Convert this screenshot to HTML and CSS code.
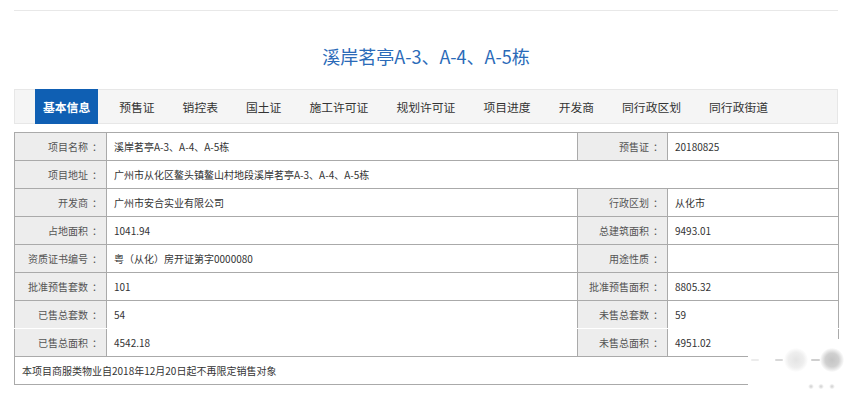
FILE: index.html
```html
<!DOCTYPE html>
<html lang="zh-CN">
<head>
<meta charset="utf-8">
<title>溪岸茗亭A-3、A-4、A-5栋</title>
<link rel="stylesheet" href="styles.css">
</head>
<body>
<div class="page">
  <div class="topline"></div>
  <h1 class="title">溪岸茗亭A-3、A-4、A-5栋</h1>
  <ul class="tabs">
    <li class="tab active">基本信息</li>
    <li class="tab">预售证</li>
    <li class="tab">销控表</li>
    <li class="tab">国土证</li>
    <li class="tab">施工许可证</li>
    <li class="tab">规划许可证</li>
    <li class="tab">项目进度</li>
    <li class="tab">开发商</li>
    <li class="tab">同行政区划</li>
    <li class="tab">同行政街道</li>
  </ul>
  <table class="info">
    <colgroup>
      <col class="c-label1">
      <col class="c-value1">
      <col class="c-label2">
      <col class="c-value2">
    </colgroup>
    <tr>
      <th>项目名称<span class="colon">：</span></th><td>溪岸茗亭A-3、A-4、A-5栋</td>
      <th>预售证<span class="colon">：</span></th><td>20180825</td>
    </tr>
    <tr>
      <th>项目地址<span class="colon">：</span></th><td colspan="3">广州市从化区鳌头镇鳌山村地段溪岸茗亭A-3、A-4、A-5栋</td>
    </tr>
    <tr>
      <th>开发商<span class="colon">：</span></th><td>广州市安合实业有限公司</td>
      <th>行政区划<span class="colon">：</span></th><td>从化市</td>
    </tr>
    <tr>
      <th>占地面积<span class="colon">：</span></th><td>1041.94</td>
      <th>总建筑面积<span class="colon">：</span></th><td>9493.01</td>
    </tr>
    <tr>
      <th>资质证书编号<span class="colon">：</span></th><td>粤（从化）房开证第字0000080</td>
      <th>用途性质<span class="colon">：</span></th><td></td>
    </tr>
    <tr>
      <th>批准预售套数<span class="colon">：</span></th><td>101</td>
      <th>批准预售面积<span class="colon">：</span></th><td>8805.32</td>
    </tr>
    <tr class="joined-top">
      <th>已售总套数<span class="colon">：</span></th><td>54</td>
      <th>未售总套数<span class="colon">：</span></th><td>59</td>
    </tr>
    <tr class="joined-bottom">
      <th>已售总面积<span class="colon">：</span></th><td>4542.18</td>
      <th>未售总面积<span class="colon">：</span></th><td>4951.02</td>
    </tr>
    <tr>
      <td class="note" colspan="4">本项目商服类物业自2018年12月20日起不再限定销售对象</td>
    </tr>
  </table>
</div>
<div class="overlay">
  <span class="dash dash1"></span>
  <span class="dash dash2"></span>
  <span class="blob blob1"></span>
  <span class="dash dash3"></span>
  <span class="blob blob2"></span>
  <span class="mini mini1"></span>
  <span class="mini mini2"></span>
  <span class="mini mini3"></span>
</div>
</body>
</html>
```

FILE: styles.css
```css
html, body {
  margin: 0;
  padding: 0;
  background: #ffffff;
}

body {
  font-family: "Noto Sans CJK SC", "Microsoft YaHei", sans-serif;
  color: #333333;
  position: relative;
  width: 860px;
  height: 394px;
  overflow: hidden;
}

.page {
  width: 824px;
  margin-left: 14px;
  padding-top: 10px;
}

.topline {
  border-top: 1px solid #e8e8e8;
}

.title {
  margin: 0 0 21px 0;
  padding-top: 33px;
  height: 24px;
  line-height: 24px;
  font-size: 18px;
  font-weight: normal;
  color: #2a6ab8;
  text-align: center;
}

.tabs {
  display: flex;
  margin: 0;
  padding: 0 0 0 21px;
  list-style: none;
  height: 35px;
  background: #f5f5f5;
  box-shadow: inset 0 0 0 1px #e7e7e7;
}

.tab {
  padding: 0 7px;
  margin-right: 14px;
  line-height: 35px;
  font-size: 11.8px;
  color: #333333;
  white-space: nowrap;
}

.tab.active {
  padding: 0 8px;
  background: #0f5fb3;
  color: #ffffff;
  font-weight: bold;
}

.info {
  margin-top: 8px;
  width: 824px;
  border-collapse: collapse;
  table-layout: fixed;
}

.c-label1 { width: 92px; }
.c-value1 { width: 471px; }
.c-label2 { width: 90px; }
.c-value2 { width: 171px; }

.info th,
.info td {
  height: 27px;
  border: 1px solid #aaaaaa;
  font-size: 10px;
  line-height: 14px;
  padding: 0 7px;
  white-space: nowrap;
  overflow: hidden;
}

.info th {
  background: #ededed;
  font-weight: normal;
  color: #555555;
  text-align: right;
  padding: 0 4px 0 0;
}

.info th .colon {
  margin-left: 4px;
}

.info td {
  color: #333333;
  text-align: left;
}

.info .joined-top th,
.info .joined-top td {
  border-bottom-color: #ffffff;
}

.info .joined-bottom th,
.info .joined-bottom td {
  border-top-color: #ffffff;
}

.info td.note {
  padding-left: 7px;
}

/* blurred loading marks overlapping the bottom-right corner */
.overlay {
  position: absolute;
  left: 748px;
  top: 339px;
  width: 112px;
  height: 55px;
  background: #ffffff;
}

.overlay span {
  position: absolute;
  display: block;
}

.dash {
  height: 2px;
  top: 20px;
  border-radius: 1px;
  background: #e2e2e2;
}

.dash1 { left: 3px; width: 8px; background: #ececec; }
.dash2 { left: 27px; width: 8px; background: #d8d8d8; }
.dash3 { left: 63px; width: 9px; background: #cfcfcf; }

.blob {
  border-radius: 50%;
}

.blob1 {
  left: 36px;
  top: 9px;
  width: 24px;
  height: 24px;
  background: radial-gradient(circle, #e4e4e4 0%, #eeeeee 45%, rgba(255,255,255,0) 72%);
}

.blob2 {
  left: 72px;
  top: 9px;
  width: 24px;
  height: 24px;
  background: radial-gradient(circle, #c4c4c4 0%, #d0d0d0 40%, rgba(255,255,255,0) 72%);
}

.mini {
  top: 45px;
  width: 6px;
  height: 5px;
  border-radius: 50%;
  background: radial-gradient(circle, #cfcfcf 0%, rgba(255,255,255,0) 75%);
}

.mini1 { left: 60px; }
.mini2 { left: 70px; }
.mini3 { left: 81px; }
```
